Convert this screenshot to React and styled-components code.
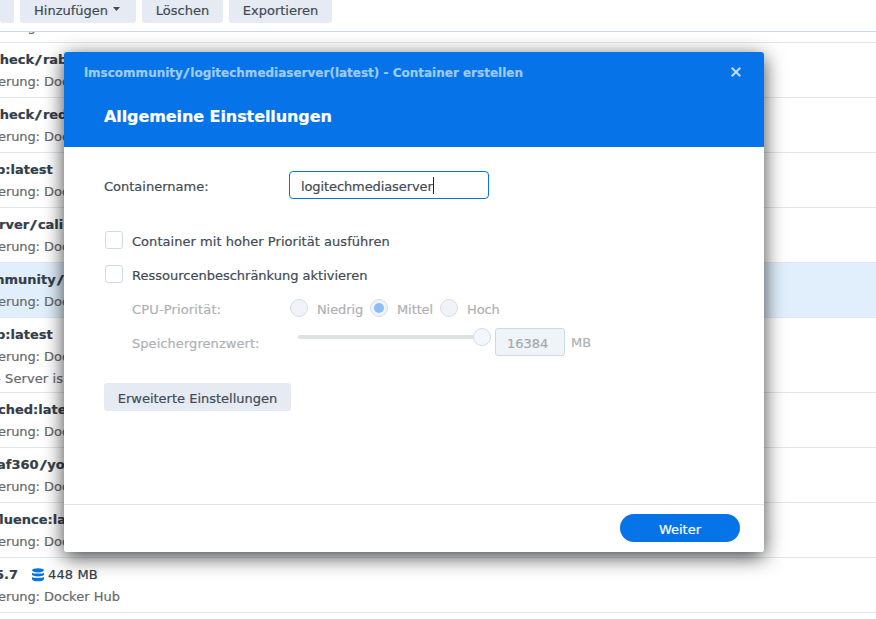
import React from "react";
import styled, { createGlobalStyle } from "styled-components";

const GlobalStyle = createGlobalStyle`
  * { box-sizing: border-box; }
  html, body { margin: 0; padding: 0; overflow: hidden; background: #fff; }
  body, button, input { font-family: "DejaVu Sans", Verdana, sans-serif; font-size: 13px; }
`;

const Page = styled.div`
  position: relative;
  width: 876px;
  height: 619px;
  overflow: hidden;
  color: #414b55;
`;

const Text = styled.span`
  display: block;
  white-space: pre;
  line-height: 20px;
  letter-spacing: ${(p) => p.$ls || 0}px;
  -webkit-text-stroke: 0.2px currentColor;
`;

const Toolbar = styled.div`
  display: flex;
  align-items: flex-end;
  gap: 6px;
  height: 32px;
  padding-bottom: 8px;
  border-bottom: 1px solid #c9d7e6;
`;

const Button = styled.button`
  display: flex;
  flex: none;
  align-items: center;
  justify-content: center;
  gap: 5px;
  width: ${(p) => p.$w}px;
  height: 28px;
  padding: 4px 0 0;
  border: 0;
  border-radius: 3px;
  background: #e6eaf2;
  color: #414b55;
`;

const MenuButton = styled(Button)`
  padding-right: 2px;
`;

const Caret = styled.svg`
  width: 7px;
  height: 4px;
  margin-bottom: 4px;
  fill: #414b55;
`;

const List = styled.div`
  height: 587px;
  overflow: hidden;
`;

const Row = styled.div`
  height: ${(p) => p.$h || 55}px;
  margin-top: ${(p) => p.$mt || 0}px;
  padding-top: 7px;
  border-bottom: 1px solid #dfe7f0;
  background: ${(p) => (p.$selected ? "#e1effd" : "#fff")};
`;

const RowTitle = styled.div`
  display: flex;
  height: 22px;
  margin-left: ${(p) => p.$x}px;
  color: #333e48;
`;

const Name = styled(Text)`
  font-weight: bold;
`;

const Slash = styled.span`
  display: inline-block;
  margin: 0 ${(p) => p.$gap || 2}px;
  transform: scaleX(1.5);
`;

const Size = styled.div`
  display: flex;
  align-items: center;
  gap: 4px;
  height: 20px;
  margin-left: 14px;
`;

const RowDetail = styled.div`
  display: flex;
  height: 22px;
  margin-left: ${(p) => p.$x || 0}px;
  color: #66696d;
`;

const Field = styled(Text)`
  width: 46px;
  margin-left: -2px;
`;

const Dialog = styled.section`
  position: absolute;
  left: 64px;
  top: 52px;
  display: flex;
  flex-direction: column;
  width: 700px;
  height: 500px;
  border-radius: 3px;
  background: #fff;
  overflow: hidden;
`;

const DialogShadow = styled.div`
  position: absolute;
  left: 64px;
  top: 52px;
  width: 700px;
  height: 500px;
  border-radius: 3px;
  box-shadow: 0 5px 20px rgba(0, 0, 0, 0.75);
`;

const Header = styled.header`
  height: 95px;
  padding: 11px 20px 0;
  background: #0773e9;
`;

const TitleBar = styled.div`
  display: flex;
  justify-content: space-between;
  height: 20px;
  font-size: 12px;
  font-weight: bold;
  color: #9dcbfb;
`;

const CloseIcon = styled.svg`
  width: 12px;
  height: 12px;
  margin: 3px 2px 0 0;
`;

const Heading = styled.h1`
  margin: 24px 20px 0;
  font-size: 16px;
  font-weight: bold;
  color: #fff;
`;

const Body = styled.div`
  flex: 1;
  padding: 24px 40px 0;
`;

const NameRow = styled.div`
  display: flex;
  height: 60px;
`;

const NameLabel = styled(Text)`
  width: 185px;
  padding-top: 6px;
`;

const NameInput = styled.div`
  display: flex;
  width: 200px;
  height: 28px;
  padding: 5px 11px 0;
  border: 1px solid #0773e9;
  border-radius: 4px;
  background: #fff;
`;

const Cursor = styled.i`
  width: 1px;
  height: 17px;
  background: #222;
`;

const CheckRow = styled.label`
  display: flex;
  height: 34px;
  padding-left: 1px;
`;

const Label = styled(Text)`
  margin-top: 1px;
`;

const Box = styled.span`
  width: 18px;
  height: 18px;
  margin-right: 9px;
  border: 1px solid #ccdbe8;
  border-radius: 3px;
`;

const DisabledRow = styled.div`
  display: flex;
  height: ${(p) => p.$h}px;
  padding-left: 28px;
  color: #aeb1b4;
`;

const RowLabel = styled(Label)`
  width: 158px;
`;

const Option = styled.div`
  display: flex;
  width: ${(p) => p.$w}px;
`;

const Radio = styled.span`
  display: flex;
  align-items: center;
  justify-content: center;
  flex: none;
  width: 18px;
  height: 18px;
  margin-right: 9px;
  border: 1px solid #d3dee8;
  border-radius: 50%;
  background: #f0f4f8;
`;

const Dot = styled.span`
  width: 10px;
  height: 10px;
  border-radius: 50%;
  background: #8bbff4;
`;

const Slider = styled.div`
  display: flex;
  align-items: center;
  width: 193px;
  height: 18px;
  margin: -5px 4px 0 8px;
`;

const Track = styled.span`
  width: 175px;
  height: 4px;
  border-radius: 2px 0 0 2px;
  background: #dce1e4;
`;

const Thumb = styled.span`
  width: 18px;
  height: 18px;
  border: 1px solid #d0dbe6;
  border-radius: 50%;
  background: #f3f8fe;
`;

const NumberBox = styled.div`
  width: 70px;
  height: 28px;
  margin: -5px 6px 0 0;
  padding: 5px 11px 0;
  border: 1px solid #ccd9e6;
  border-radius: 3px;
  background: #f0f4f8;
  color: #a5a9ad;
`;

const Footer = styled.footer`
  display: flex;
  justify-content: flex-end;
  height: 48px;
  padding: 9px 24px 0;
  border-top: 1px solid #dbe3ec;
`;

const Primary = styled(Button)`
  border-radius: 14px;
  background: #0773e9;
  color: #fff;
`;

const DatabaseIcon = () => (
  <svg width="12" height="14" viewBox="0 0 12 14" fill="#0773e9">
    <ellipse cx="6" cy="2.3" rx="6" ry="2.1" />
    <path d="M0 4.7C1.6 5.9 10.4 5.9 12 4.7V7.1C10.4 8.9 1.6 8.9 0 7.1Z" />
    <path d="M0 9.1C1.6 10.3 10.4 10.3 12 9.1V11.4C10.4 14 1.6 14 0 11.4Z" />
  </svg>
);

const rows = [
  { name: "", x: 0, mt: -44 },
  { name: "check/rab", x: -8 },
  { name: "check/red", x: -8 },
  { name: "b:latest", x: -4 },
  { name: "rver/calibre", x: -1 },
  { name: "mmunity/logi", x: -9, selected: true },
  { name: "b:latest", x: -4, h: 75, extra: true },
  { name: "ched:latest", x: -2 },
  { name: "af360/you", x: -3 },
  { name: "fluence:latest", x: -6 },
  { name: "5.7", x: -5, size: "448 MB" },
];

const ListRow = ({ row }) => (
  <Row $h={row.h} $mt={row.mt} $selected={row.selected}>
    <RowTitle $x={row.x}>
      <Name>
        {row.name.split("/").map((part, i) => (
          <React.Fragment key={i}>
            {i > 0 && <Slash>/</Slash>}
            {part}
          </React.Fragment>
        ))}
      </Name>
      {row.size && (
        <Size>
          <DatabaseIcon />
          <Text $ls={0.1}>{row.size}</Text>
        </Size>
      )}
    </RowTitle>
    <RowDetail>
      <Field $ls={-0.1}>erung:</Field>
      <Text>Docker Hub</Text>
    </RowDetail>
    {row.extra && (
      <RowDetail $x={-4}>
        <Text $ls={0.1}>- Server is</Text>
      </RowDetail>
    )}
  </Row>
);

export default function App() {
  return (
    <Page>
      <GlobalStyle />
      <Toolbar>
        <Button $w={14} />
        <MenuButton $w={116}>
          <Text>Hinzufügen</Text>
          <Caret viewBox="0 0 7 4"><path d="M0 0H7L3.5 4Z" /></Caret>
        </MenuButton>
        <Button $w={81}><Text>Löschen</Text></Button>
        <Button $w={103}><Text>Exportieren</Text></Button>
      </Toolbar>
      <List>
        {rows.map((row, i) => <ListRow key={i} row={row} />)}
      </List>
      <DialogShadow />
      <Dialog>
        <Header>
          <TitleBar>
            <Text>lmscommunity<Slash $gap={1.5}>/</Slash>logitechmediaserver(latest) - Container erstellen</Text>
            <CloseIcon viewBox="0 0 12 12">
              <path d="M1.7 1.7L10.3 10.3M10.3 1.7L1.7 10.3" stroke="#b4d8fc" strokeWidth="2.3" />
            </CloseIcon>
          </TitleBar>
          <Heading><Text $ls={-0.08}>Allgemeine Einstellungen</Text></Heading>
        </Header>
        <Body>
          <NameRow>
            <NameLabel>Containername:</NameLabel>
            <NameInput>
              <Text $ls={-0.1}>logitechmediaserver</Text>
              <Cursor />
            </NameInput>
          </NameRow>
          <CheckRow><Box /><Label $ls={0.04}>Container mit hoher Priorität ausführen</Label></CheckRow>
          <CheckRow><Box /><Label>Ressourcenbeschränkung aktivieren</Label></CheckRow>
          <DisabledRow $h={34}>
            <RowLabel $ls={0.15}>CPU-Priorität:</RowLabel>
            <Option $w={80}><Radio /><Label $ls={-0.1}>Niedrig</Label></Option>
            <Option $w={70}><Radio><Dot /></Radio><Label $ls={-0.1}>Mittel</Label></Option>
            <Option $w={70}><Radio /><Label $ls={-0.1}>Hoch</Label></Option>
          </DisabledRow>
          <DisabledRow $h={50}>
            <RowLabel $ls={0.06}>Speichergrenzwert:</RowLabel>
            <Slider><Track /><Thumb /></Slider>
            <NumberBox><Text>16384</Text></NumberBox>
            <Text>MB</Text>
          </DisabledRow>
          <Button $w={187}><Text>Erweiterte Einstellungen</Text></Button>
        </Body>
        <Footer>
          <Primary $w={120}><Text>Weiter</Text></Primary>
        </Footer>
      </Dialog>
    </Page>
  );
}
